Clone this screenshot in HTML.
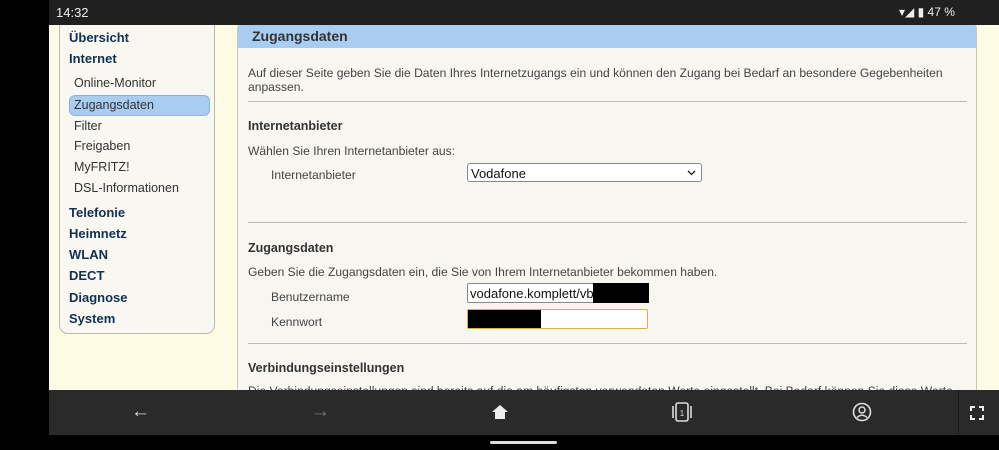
<!DOCTYPE html>
<html><head><meta charset="utf-8"><style>
*{margin:0;padding:0;box-sizing:border-box}
body{width:999px;height:450px;overflow:hidden;background:#000;font-family:"Liberation Sans",sans-serif;position:relative}
.a{position:absolute;white-space:nowrap}
#sb{left:49px;top:0;width:950px;height:25px;background:#202020;color:#eee;font-size:13px}
#pg{left:49px;top:25px;width:950px;height:365px;background:#fdfbe4;overflow:hidden}
#nav{left:10px;top:-8px;width:156px;height:317px;border:1px solid #b9bdb0;border-radius:9px;background:#f9f7f1}
.n1{font-weight:bold;font-size:13px;color:#123052;left:9px}
.n2{font-size:12.5px;color:#333;left:14px}
#sel{left:9px;top:77px;width:141px;height:21px;background:#a9cdf0;border:1px solid #8ab4de;border-radius:6px}
#ct{left:188px;top:-4px;width:740px;height:400px;background:#f8f6f1;border:1px solid #c6c8c0;border-radius:8px;overflow:hidden}
#hd{left:0;top:0;width:740px;height:26px;background:#a9cdf0}
.t{font-size:12.1px;color:#444}
.b{font-weight:bold;font-size:12.5px;color:#333}
.hr{position:absolute;left:10px;width:719px;height:1px;background:#bbb}
#bb{left:49px;top:390px;width:950px;height:45px;background:#2a2a2a}
</style></head><body>
<div id="sb" class="a"><span class="a" style="left:7px;top:5px">14:32</span><span class="a" style="left:850px;top:5px;font-size:12px">▾◢ ▮ 47 %</span></div>
<div id="pg" class="a">
 <div id="nav" class="a">
  <div id="sel" class="a"></div>
  <span class="a n1" style="top:12px">Übersicht</span>
  <span class="a n1" style="top:33px">Internet</span>
  <span class="a n2" style="top:58px">Online-Monitor</span>
  <span class="a n2" style="top:80px">Zugangsdaten</span>
  <span class="a n2" style="top:101px">Filter</span>
  <span class="a n2" style="top:121px">Freigaben</span>
  <span class="a n2" style="top:142px">MyFRITZ!</span>
  <span class="a n2" style="top:163px">DSL-Informationen</span>
  <span class="a n1" style="top:187px">Telefonie</span>
  <span class="a n1" style="top:208px">Heimnetz</span>
  <span class="a n1" style="top:229px">WLAN</span>
  <span class="a n1" style="top:250px">DECT</span>
  <span class="a n1" style="top:272px">Diagnose</span>
  <span class="a n1" style="top:293px">System</span>
 </div>
 <div id="ct" class="a">
  <div id="hd" class="a"></div>
  <span class="a" style="left:14px;top:6px;font-size:14px;font-weight:bold;color:#333">Zugangsdaten</span>
  <span class="a t" style="left:10px;top:44px">Auf dieser Seite geben Sie die Daten Ihres Internetzugangs ein und können den Zugang bei Bedarf an besondere Gegebenheiten</span>
  <span class="a t" style="left:10px;top:58px">anpassen.</span>
  <div class="hr" style="top:79px"></div>
  <span class="a b" style="left:10px;top:97px">Internetanbieter</span>
  <span class="a t" style="left:10px;top:122px">Wählen Sie Ihren Internetanbieter aus:</span>
  <span class="a t" style="left:33px;top:146px">Internetanbieter</span>
  <div class="a" style="left:229px;top:141px;width:235px;height:19px;background:#fff;border:1px solid #888;border-radius:3px;font-size:13px;color:#111;padding:2px 3px">Vodafone<svg class="a" style="right:5px;top:6px" width="9" height="6" viewBox="0 0 9 6"><path d="M1 1L4.5 4.5L8 1" fill="none" stroke="#222" stroke-width="1.3"/></svg></div>
  <div class="hr" style="top:200px"></div>
  <span class="a b" style="left:10px;top:219px">Zugangsdaten</span>
  <span class="a t" style="left:10px;top:243px">Geben Sie die Zugangsdaten ein, die Sie von Ihrem Internetanbieter bekommen haben.</span>
  <span class="a t" style="left:33px;top:268px">Benutzername</span>
  <div class="a" style="left:229px;top:261px;width:181px;height:20px;background:#fff;border:1px solid #888;border-radius:2px;font-size:13px;color:#111;padding:2px 2px">vodafone.komplett/vb<div class="a" style="left:125px;top:-1px;width:56px;height:20px;background:#000"></div></div>
  <span class="a t" style="left:33px;top:293px">Kennwort</span>
  <div class="a" style="left:229px;top:287px;width:181px;height:20px;background:#fff;border:1px solid #d8b04a;border-radius:2px"><div class="a" style="left:0;top:0;width:73px;height:18px;background:#000"></div></div>
  <div class="hr" style="top:321px"></div>
  <span class="a b" style="left:10px;top:339px">Verbindungseinstellungen</span>
  <span class="a t" style="left:10px;top:362px">Die Verbindungseinstellungen sind bereits auf die am häufigsten verwendeten Werte eingestellt. Bei Bedarf können Sie diese Werte</span>
 </div>
</div>
<div id="bb" class="a">
 <span class="a" style="left:82px;top:11px;color:#ddd;font-size:19px">←</span>
 <span class="a" style="left:262px;top:11px;color:#777;font-size:19px">→</span>
 <svg class="a" style="left:442px;top:14px" width="18" height="16" viewBox="0 0 18 16"><path d="M9 1 L17 8 H14 V15 H4 V8 H1 Z" fill="#eee"/></svg>
 <svg class="a" style="left:622px;top:12px" width="22" height="20" viewBox="0 0 22 20"><rect x="5" y="1" width="12" height="18" rx="2" fill="none" stroke="#ddd" stroke-width="1.6"/><path d="M2 4V16M20 4V16" stroke="#ddd" stroke-width="1.6"/><text x="11" y="14" font-size="8" fill="#ddd" text-anchor="middle" font-family="Liberation Sans">1</text></svg>
 <svg class="a" style="left:803px;top:12px" width="20" height="20" viewBox="0 0 20 20"><circle cx="10" cy="10" r="8.5" fill="none" stroke="#ddd" stroke-width="1.6"/><circle cx="10" cy="8" r="3" fill="none" stroke="#ddd" stroke-width="1.5"/><path d="M5 15.5 Q10 11 15 15.5" fill="none" stroke="#ddd" stroke-width="1.5"/></svg>
 <div class="a" style="left:909px;top:0;width:1px;height:45px;background:#1a1a1a"></div>
 <svg class="a" style="left:921px;top:16px" width="14" height="14" viewBox="0 0 14 14"><path d="M1 5V1H5M9 1H13V5M13 9V13H9M5 13H1V9" fill="none" stroke="#eee" stroke-width="2"/></svg>
</div>
<div class="a" style="left:490px;top:441px;width:67px;height:3px;background:#ddd;border-radius:2px"></div>
</body></html>
